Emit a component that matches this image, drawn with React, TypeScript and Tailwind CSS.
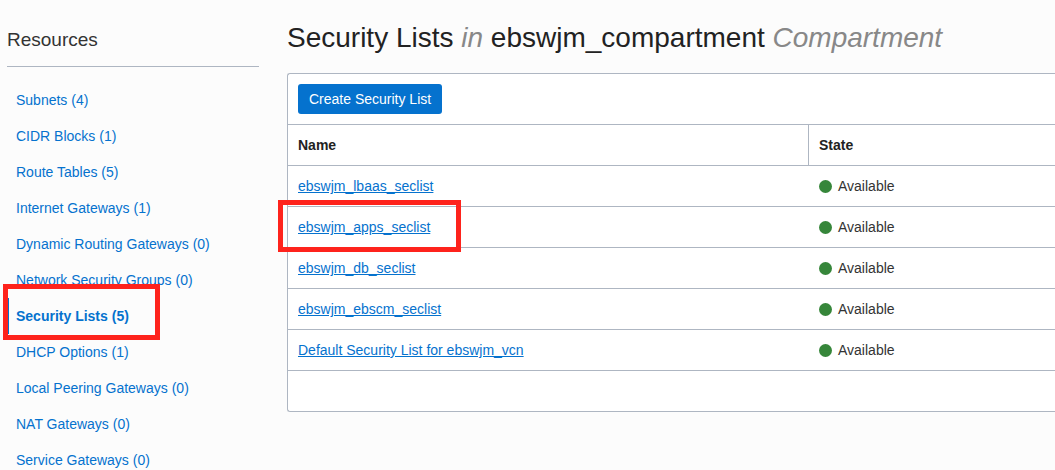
const resources = [
  { label: 'Subnets', count: 4 },
  { label: 'CIDR Blocks', count: 1 },
  { label: 'Route Tables', count: 5 },
  { label: 'Internet Gateways', count: 1 },
  { label: 'Dynamic Routing Gateways', count: 0 },
  { label: 'Network Security Groups', count: 0 },
  { label: 'Security Lists', count: 5, active: true },
  { label: 'DHCP Options', count: 1 },
  { label: 'Local Peering Gateways', count: 0 },
  { label: 'NAT Gateways', count: 0 },
  { label: 'Service Gateways', count: 0 },
];

const securityLists = [
  { name: 'ebswjm_lbaas_seclist', state: 'Available' },
  { name: 'ebswjm_apps_seclist', state: 'Available', marked: true },
  { name: 'ebswjm_db_seclist', state: 'Available' },
  { name: 'ebswjm_ebscm_seclist', state: 'Available' },
  { name: 'Default Security List for ebswjm_vcn', state: 'Available' },
];

function Sidebar() {
  return (
    <aside className="w-[252px] shrink-0 text-[#0572ce]">
      <h2 className="h-[67px] border-b border-[#aeb6c2] pt-[26px] text-[19px] leading-7 text-[#333]">
        Resources
      </h2>
      <nav aria-label="Resources" className="pt-[15px]">
        <ul>
          {resources.map((item) => (
            <li key={item.label} className="relative">
              <a
                href="#"
                aria-current={item.active ? 'page' : undefined}
                className={
                  item.active
                    ? 'flex h-9 items-center border-l-2 border-[#0572ce] pl-[7px] font-bold'
                    : 'flex h-9 items-center pl-[9px]'
                }
              >
                {item.label} ({item.count})
              </a>
              {item.active && (
                <span className="pointer-events-none absolute -top-[14px] -left-1 z-10 h-[56px] w-[157px] border-[5px] border-[#fe231c]" />
              )}
            </li>
          ))}
        </ul>
      </nav>
    </aside>
  );
}

function SecurityListTable() {
  return (
    <table className="w-full table-fixed border-separate border-spacing-0 text-left">
      <thead>
        <tr>
          <th className="h-[41px] w-[521px] border-r border-b border-[#aeb6c2] px-[10px] font-bold">
            Name
          </th>
          <th className="h-[41px] border-b border-[#aeb6c2] px-[10px] font-bold">State</th>
        </tr>
      </thead>
      <tbody>
        {securityLists.map((row) => (
          <tr key={row.name}>
            <td className="relative h-[41px] border-b border-[#aeb6c2] px-[10px]">
              <a href="#" className="text-[#0572ce] underline">
                {row.name}
              </a>
              {row.marked && (
                <span className="pointer-events-none absolute -top-[7px] -left-[10px] z-10 h-[52px] w-[183px] border-[5px] border-[#fe231c]" />
              )}
            </td>
            <td className="h-[41px] border-b border-[#aeb6c2] px-[10px] text-[#333]">
              <span className="flex items-center gap-[6px]">
                <span className="size-[13px] rounded-full bg-[#36863a]" />
                {row.state}
              </span>
            </td>
          </tr>
        ))}
      </tbody>
    </table>
  );
}

export default function App() {
  return (
    <div className="flex min-h-screen gap-7 overflow-hidden bg-[#fcfcfc] pl-[7px] font-['Liberation_Sans',Arial,sans-serif] text-[14px] leading-5 text-[#222]">
      <Sidebar />
      <main className="min-w-0 flex-1">
        <h1 className="h-[73px] pt-[20px] text-[28px] leading-9 whitespace-nowrap">
          Security Lists <em className="text-[#888]">in</em> ebswjm_compartment{' '}
          <em className="text-[#888]">Compartment</em>
        </h1>
        <section className="rounded-l-[3px] border border-r-0 border-[#aeb6c2] bg-white">
          <div className="border-b border-[#aeb6c2] p-[10px]">
            <button
              type="button"
              className="block h-[30px] rounded-[3px] bg-[#0572ce] px-[11px] text-white"
            >
              Create Security List
            </button>
          </div>
          <SecurityListTable />
          <div className="h-10" />
        </section>
      </main>
    </div>
  );
}
